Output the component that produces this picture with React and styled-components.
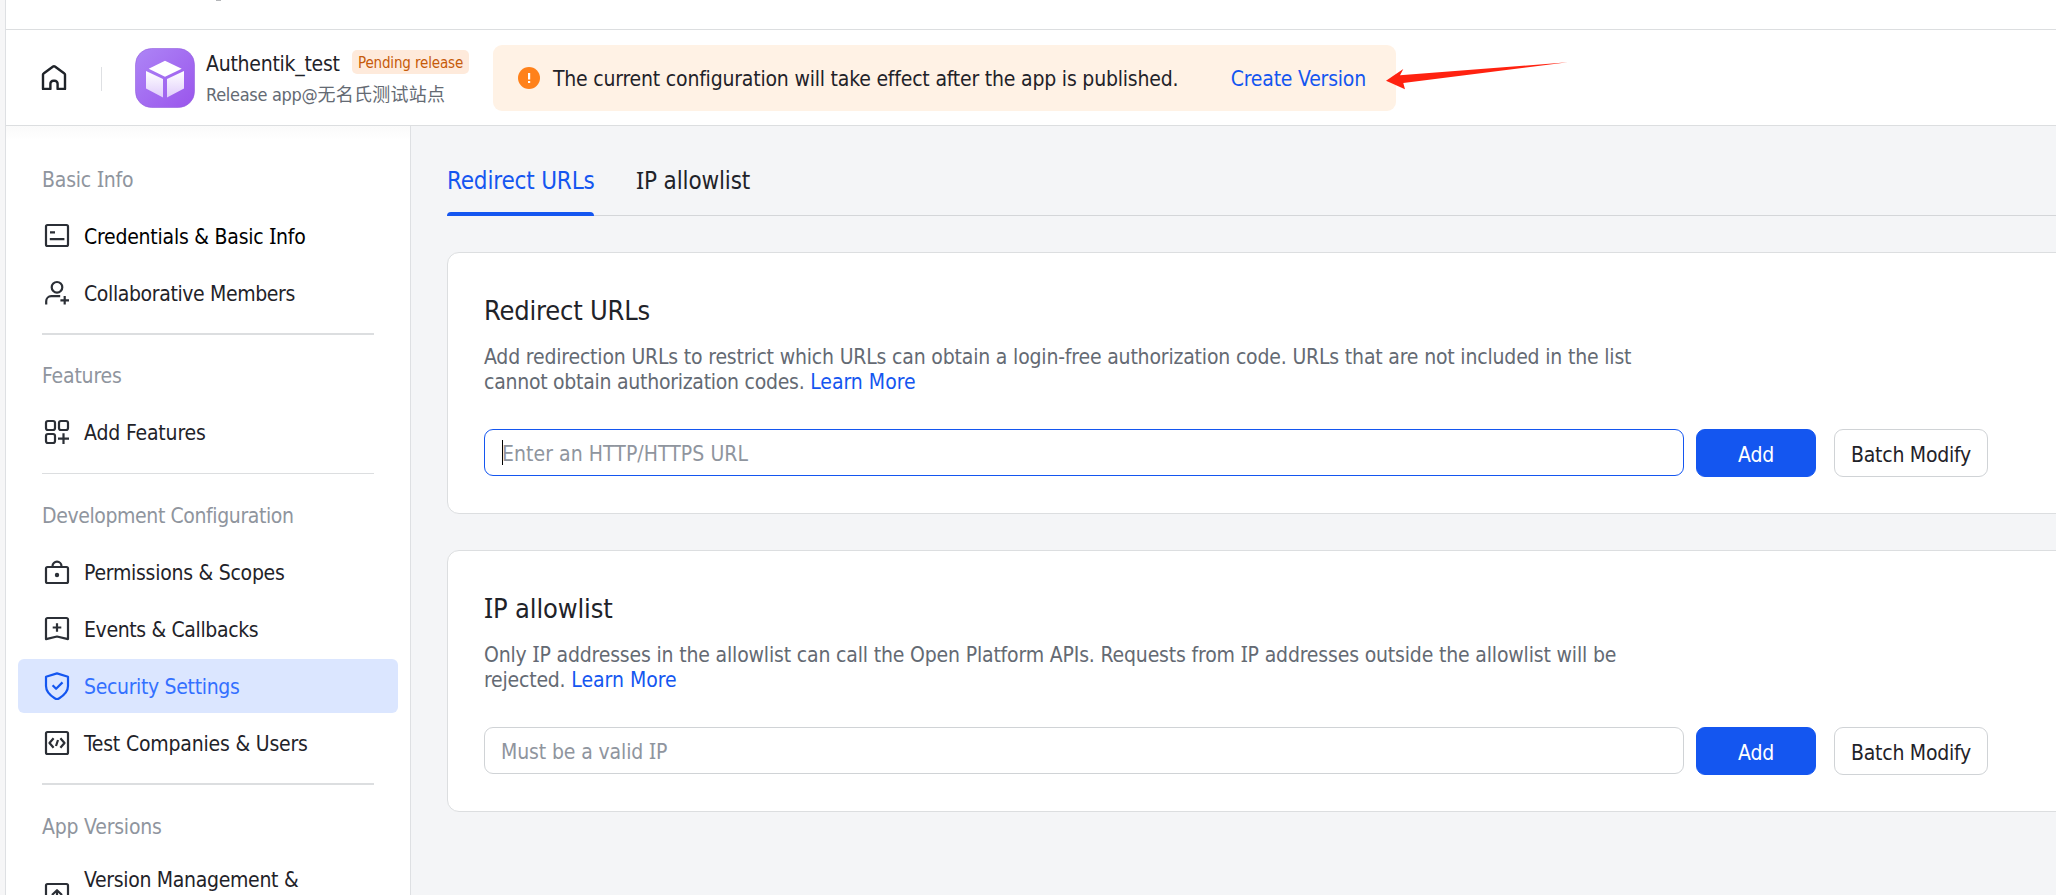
import React from "react";
import styled, { createGlobalStyle } from "styled-components";

const GlobalStyle = createGlobalStyle`
  * { box-sizing: border-box; }
  body {
    margin: 0;
    overflow: hidden;
    background: #f6f6f7;
    color: #1f2329;
    font-family: "DejaVu Sans Condensed", "Noto Sans CJK SC", sans-serif;
    font-size: 21px;
  }
`;

const Page = styled.div`
  margin-left: 5px;
  height: 895px;
  border-left: 1px solid #dee0e3;
  display: flex;
  flex-direction: column;
  background: #fff;
  overflow: hidden;
`;

const TopStrip = styled.div`
  height: 30px;
  flex: none;
  padding-left: 210px;
  border-bottom: 1px solid #dcdee0;
`;

const StripMark = styled.div`
  width: 5px;
  height: 1px;
  background: #b4b6b9;
`;

const Header = styled.header`
  position: relative;
  height: 96px;
  flex: none;
  display: flex;
  align-items: center;
  padding: 0 0 0 34px;
  border-bottom: 1px solid #dcdee0;
`;

const HeaderRule = styled.div`
  width: 1px;
  height: 24px;
  margin: 2px 33px 0;
  background: #dee0e3;
`;

const AppInfo = styled.div`
  margin-left: 11px;
  width: 287px;
`;

const NameRow = styled.div`
  display: flex;
  align-items: center;
  height: 32px;
`;

const AppName = styled.span`
  width: 146px;
  padding-top: 3px;
  letter-spacing: -0.25px;
  white-space: nowrap;
`;

const Badge = styled.span`
  height: 24px;
  width: 117px;
  line-height: 26px;
  text-align: center;
  border-radius: 5px;
  background: #feeadb;
  color: #c65a09;
  font-size: 15px;
  letter-spacing: -0.15px;
  white-space: nowrap;
`;

const TenantName = styled.div`
  height: 31px;
  line-height: 31px;
  font-size: 18px;
  color: #646a73;
  letter-spacing: -0.3px;
  white-space: nowrap;
`;

const Cjk = styled.span`
  font-family: "Noto Sans CJK SC", sans-serif;
  letter-spacing: 0.25px;
`;

const Notice = styled.div`
  width: 903px;
  height: 66px;
  border-radius: 9px;
  background: #fff2e5;
  display: flex;
  align-items: center;
  padding: 0 30px 0 25px;
`;

const NoticeText = styled.span`
  margin-left: 13px;
  padding-top: 2px;
  letter-spacing: -0.197px;
  flex: 1;
  white-space: nowrap;
`;

const NoticeAction = styled.a`
  padding-top: 2px;
  color: #1456f0;
  letter-spacing: -0.197px;
  white-space: nowrap;
`;

const Link = styled.a`
  color: #1456f0;
  white-space: nowrap;
`;

const Arrow = styled.svg`
  position: absolute;
  left: 1374px;
  top: 25px;
`;

const Body = styled.div`
  flex: 1;
  display: flex;
  min-height: 0;
`;

const Sidebar = styled.nav`
  width: 405px;
  flex: none;
  padding: 26px 12px 0;
  border-right: 1px solid #dee0e3;
  background: linear-gradient(#fafafa, #fff 14px);
  overflow: hidden;
`;

const SectionTitle = styled.div`
  height: 54px;
  line-height: 57px;
  margin-bottom: 3px;
  padding-left: 24px;
  color: #8f959e;
  letter-spacing: ${p => p.$track}px;
`;

const Item = styled.div`
  height: ${p => (p.$tall ? 77 : 54)}px;
  display: flex;
  align-items: center;
  gap: 13px;
  padding-left: 25px;
  border-radius: 6px;
  background: ${p => (p.$active ? "#dbe6ff" : "transparent")};
  color: ${p => (p.$active ? "#3370ff" : p.$strong ? "#000" : "#1f2329")};
  letter-spacing: ${p => p.$track}px;
  line-height: 30px;
  & + & { margin-top: 3px; }
  svg {
    flex: none;
    overflow: visible;
    color: ${p => (p.$active ? "#1456f0" : "#2b2f36")};
  }
`;

const ItemLabel = styled.span`
  padding-top: ${p => (p.$tall ? 9 : 2)}px;
  align-self: ${p => (p.$tall ? "flex-start" : "center")};
  white-space: nowrap;
`;

const Rule = styled.div`
  height: ${p => p.$thick}px;
  margin: ${p => p.$above}px 24px ${p => p.$below}px 24px;
  background: #dcdee0;
`;

const Main = styled.main`
  flex: 1;
  min-width: 0;
  padding-left: 36px;
  background: #f4f5f7;
`;

const Tabs = styled.div`
  height: 90px;
  display: flex;
  gap: 42px;
  border-bottom: 1px solid #d4d6d9;
`;

const Tab = styled.div`
  height: 90px;
  width: ${p => p.$w}px;
  padding-top: 39px;
  display: flex;
  flex-direction: column;
  justify-content: space-between;
  line-height: 32px;
  font-size: 24px;
  letter-spacing: ${p => p.$track}px;
  color: ${p => (p.$active ? "#1456f0" : "#1f2329")};
  white-space: nowrap;
`;

const TabBar = styled.div`
  height: 4px;
  border-radius: 4px 4px 0 0;
  background: #1456f0;
`;

const Card = styled.section`
  width: 1640px;
  height: 262px;
  margin-top: 36px;
  padding: 41px 36px 0;
  background: #fff;
  border: 1px solid #dcdee0;
  border-radius: 12px;
`;

const CardTitle = styled.h2`
  margin: 0;
  height: 34px;
  line-height: 34px;
  font-weight: 400;
  font-size: 27px;
  letter-spacing: ${p => p.$track}px;
`;

const Description = styled.p`
  margin: 17px 0 0;
  line-height: 25px;
  height: 50px;
  color: #646a73;
  white-space: nowrap;
`;

const Tracked = styled.span`
  letter-spacing: ${p => p.$track}px;
`;

const FieldRow = styled.div`
  margin-top: 34px;
  display: flex;
  align-items: flex-start;
`;

const Field = styled.div`
  width: 1200px;
  height: 47px;
  margin-right: 12px;
  padding: 2px 0 0 ${p => (p.$focus ? 17 : 16)}px;
  display: flex;
  align-items: center;
  border: 1px solid ${p => (p.$focus ? "#1456f0" : "#d0d3d6")};
  border-radius: 9px;
  color: #8f959e;
  letter-spacing: ${p => p.$track}px;
`;

const Caret = styled.span`
  width: 1px;
  height: 25px;
  margin: -2px -1px 0 0;
  background: #000;
`;

const Button = styled.button`
  width: ${p => (p.$primary ? 120 : 154)}px;
  height: 48px;
  margin-right: 18px;
  padding: 3px 0 0;
  border: 1px solid ${p => (p.$primary ? "#1456f0" : "#d0d3d6")};
  border-radius: 9px;
  background: ${p => (p.$primary ? "#1456f0" : "#fff")};
  color: ${p => (p.$primary ? "#fff" : "#1f2329")};
  font: inherit;
  letter-spacing: -0.25px;
  white-space: nowrap;
`;

const SerifI = styled.span`
  font-family: "Noto Sans", sans-serif;
  line-height: 0;
`;
const I = () => <SerifI>I</SerifI>;

const Icon = ({ children, w = 2.2 }) => (
  <svg width="28" height="28" viewBox="0 0 28 28" fill="none" stroke="currentColor" strokeWidth={w} strokeLinejoin="round">
    {children}
  </svg>
);

const icons = {
  home: (
    <Icon w={2.4}>
      <path d="M3 24.9V10.6a1.4 1.4 0 0 1 .6-1.1l9.5-7a1.5 1.5 0 0 1 1.8 0l9.5 7a1.4 1.4 0 0 1 .6 1.1v14.3h-7.4v-5.2a3 3 0 0 0-3-3h-1.2a3 3 0 0 0-3 3v5.2z" />
    </Icon>
  ),
  card: (
    <Icon>
      <rect x="3" y="3" width="22" height="21" rx="1.5" />
      <path d="M7 10.3h5M6.8 17.2h14.6" />
    </Icon>
  ),
  member: (
    <Icon>
      <circle cx="14" cy="8.3" r="5.3" />
      <path d="M3.2 25.5v-3.3a5 5 0 0 1 5-5h9M21.7 17v8.6M17.4 21.3H26" />
    </Icon>
  ),
  grid: (
    <Icon>
      <rect x="3" y="3" width="9" height="9" rx="2" />
      <rect x="16" y="3" width="9" height="9" rx="2" />
      <rect x="3" y="16" width="9" height="9" rx="2" />
      <path d="M20.5 15.3v10.8M15 20.7h11" />
    </Icon>
  ),
  lock: (
    <Icon>
      <rect x="3" y="9" width="22" height="16" rx="1.5" />
      <path d="M9.5 9V8.2a4.5 4.5 0 0 1 9 0V9" />
      <circle cx="14" cy="17" r="2.2" fill="currentColor" stroke="none" />
    </Icon>
  ),
  event: (
    <Icon>
      <path d="M4.5 3h19A1.5 1.5 0 0 1 25 4.500v19.600l-11-2.600-11 2.600V4.500A1.500 1.500 0 0 1 4.500 3zM14 8.200v8.600M9.700 12.500h8.600" />
    </Icon>
  ),
  shield: (
    <Icon>
      <path d="M14 1.400 25 4.700v9.400c0 6.200-4.800 9.800-8.700 12.200a4.400 4.400 0 0 1-4.600 0C7.800 23.900 3 20.300 3 14.100V4.700z" />
      <path d="M9.600 13.200l3.500 3.600 6.400-6.400" />
    </Icon>
  ),
  code: (
    <Icon>
      <rect x="3" y="3" width="22" height="22" rx="1.5" />
      <path d="M10.600 9.200 6.500 14l4.100 4.800M17.400 9.200l4.100 4.800-4.100 4.800M15 11l-2 6" />
    </Icon>
  ),
  release: (
    <Icon>
      <rect x="3" y="3" width="22" height="22" rx="1.5" />
      <path d="M14 9.200v11.300M9 14l5-4.800 5 4.800" />
    </Icon>
  ),
};

const AppLogo = () => (
  <svg width="60" height="60" viewBox="0 0 60 60">
    <defs>
      <linearGradient id="logoBg" x1="0" y1="0" x2="1" y2="1">
        <stop offset="0" stopColor="#ad85f6" />
        <stop offset="1" stopColor="#9a55ec" />
      </linearGradient>
      <linearGradient id="logoFace" x1="0" y1="0" x2="0" y2="1">
        <stop offset="0" stopColor="#fff" />
        <stop offset="1" stopColor="#e0cdfb" />
      </linearGradient>
    </defs>
    <rect x=".5" y=".5" width="59" height="59" rx="16" fill="url(#logoBg)" stroke="#935fdd" strokeOpacity=".6" />
    <path d="M30 12.700 46.700 20.700 30 28.700 13.700 20.700z" fill="#fff" />
    <path d="M11 23l17 8v18.500l-17-9zM49 23l-17 8v18.500l17-9z" fill="url(#logoFace)" />
  </svg>
);

const WarningIcon = () => (
  <svg width="22" height="22" viewBox="0 0 22 22">
    <circle cx="11" cy="11" r="11" fill="#ff811a" />
    <path d="M10 6h2.200v6.500H10zM10 14h2.200v2H10z" fill="#fff" />
  </svg>
);

const nav = [
  {
    title: <>Basic <I />nfo</>, track: -0.19,
    items: [
      { icon: "card", text: <>Credentials &amp; Basic <I />nfo</>, track: -0.23, strong: true },
      { icon: "member", text: "Collaborative Members", track: -0.37 },
    ],
    rule: [2, 13, 13],
  },
  {
    title: "Features", track: -0.176,
    items: [{ icon: "grid", text: "Add Features", track: -0.16 }],
    rule: [1, 14, 14],
  },
  {
    title: "Development Configuration", track: -0.39,
    items: [
      { icon: "lock", text: "Permissions & Scopes", track: -0.26 },
      { icon: "event", text: "Events & Callbacks", track: -0.36 },
      { icon: "shield", text: "Security Settings", track: -0.33, active: true },
      { icon: "code", text: "Test Companies & Users", track: -0.19 },
    ],
    rule: [2, 13, 14],
  },
  {
    title: "App Versions", track: -0.2,
    items: [{ icon: "release", text: "Version Management &", track: -0.31, tall: true }],
  },
];

const FieldCard = ({ title, titleTrack, description, field, fieldTrack, focus }) => (
  <Card>
    <CardTitle $track={titleTrack}>{title}</CardTitle>
    <Description>{description}</Description>
    <FieldRow>
      <Field $focus={focus} $track={fieldTrack}>
        {focus && <Caret />}
        <span>{field}</span>
      </Field>
      <Button $primary>Add</Button>
      <Button>Batch Modify</Button>
    </FieldRow>
  </Card>
);

export default function App() {
  return (
    <>
      <GlobalStyle />
      <Page>
        <TopStrip><StripMark /></TopStrip>
        <Header>
          {icons.home}
          <HeaderRule />
          <AppLogo />
          <AppInfo>
            <NameRow>
              <AppName>Authentik_test</AppName>
              <Badge>Pending release</Badge>
            </NameRow>
            <TenantName>Release app@<Cjk>无名氏测试站点</Cjk></TenantName>
          </AppInfo>
          <Notice>
            <WarningIcon />
            <NoticeText>The current configuration will take effect after the app is published.</NoticeText>
            <NoticeAction>Create Version</NoticeAction>
          </Notice>
          <Arrow width="200" height="40" viewBox="0 0 200 40">
            <path d="M6 25.700 23.300 14l-3.300 6.300L187.700 7.300 23.300 28l1.700 6.300z" fill="#ff2210" />
          </Arrow>
        </Header>
        <Body>
          <Sidebar>
            {nav.map((s, i) => (
              <React.Fragment key={i}>
                <SectionTitle $track={s.track}>{s.title}</SectionTitle>
                {s.items.map(it => (
                  <Item key={it.icon} $track={it.track} $active={it.active} $strong={it.strong} $tall={it.tall}>
                    {icons[it.icon]}
                    <ItemLabel $tall={it.tall}>{it.text}</ItemLabel>
                  </Item>
                ))}
                {s.rule && <Rule $thick={s.rule[0]} $above={s.rule[1]} $below={s.rule[2]} />}
              </React.Fragment>
            ))}
          </Sidebar>
          <Main>
            <Tabs>
              <Tab $active $w={147} $track={-0.17}>
                <span>Redirect URLs</span>
                <TabBar />
              </Tab>
              <Tab $w={116} $track={-0.14}><span><I />P allowlist</span></Tab>
            </Tabs>
            <FieldCard
              title="Redirect URLs"
              titleTrack={-0.19}
              description={
                <>
                  <Tracked $track={-0.176}>
                    Add redirection URLs to restrict which URLs can obtain a login-free authorization code. URLs that are not included in the list
                  </Tracked>
                  <br />
                  <Tracked $track={-0.26}>cannot obtain authorization codes. </Tracked>
                  <Link>Learn More</Link>
                </>
              }
              field="Enter an HTTP/HTTPS URL"
              fieldTrack={0.06}
              focus
            />
            <FieldCard
              title={<><I />P allowlist</>}
              titleTrack={-0.15}
              description={
                <>
                  <Tracked $track={-0.165}>
                    Only <I />P addresses in the allowlist can call the Open Platform APIs. Requests from <I />P addresses outside the allowlist will be
                  </Tracked>
                  <br />
                  <Tracked $track={-0.2}>rejected. </Tracked>
                  <Link>Learn More</Link>
                </>
              }
              field={<>Must be a valid <I />P</>}
              fieldTrack={-0.12}
            />
          </Main>
        </Body>
      </Page>
    </>
  );
}
